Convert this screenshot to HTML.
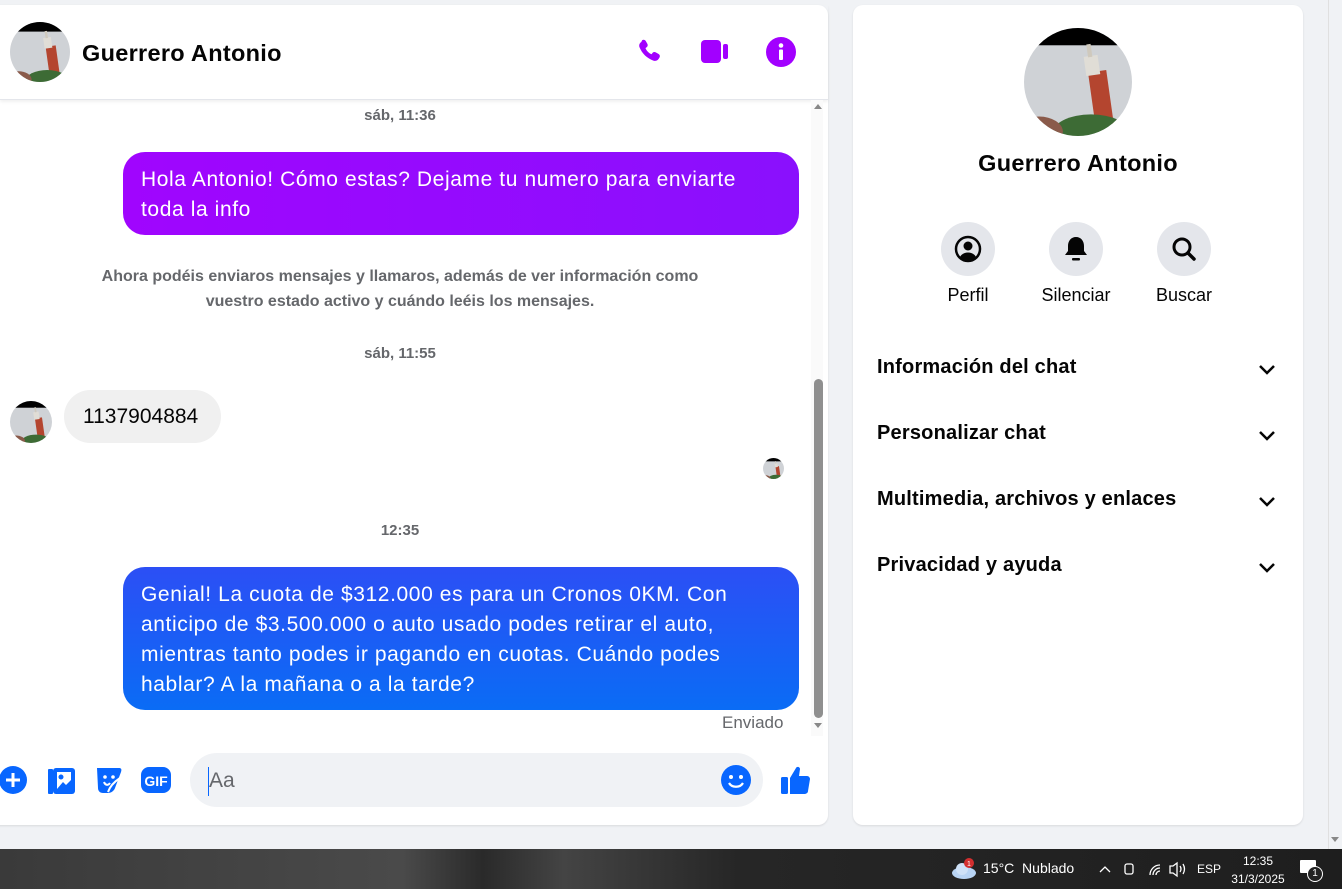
<!DOCTYPE html>
<html><head><meta charset="utf-8">
<style>
*{margin:0;padding:0;box-sizing:border-box}
body{width:1342px;height:889px;background:#f0f2f5;font-family:"Liberation Sans",sans-serif;position:relative;overflow:hidden;color:#050505}
.abs{position:absolute}
.panel{position:absolute;background:#fff;border-radius:10px;box-shadow:0 1px 2px rgba(0,0,0,.1)}
.ts{position:absolute;font-size:15px;font-weight:bold;color:#65676b;text-align:center;white-space:nowrap}
.bub{position:absolute;color:#fff;font-size:21px;letter-spacing:.6px;line-height:30px;padding:13px 18px;border-radius:22px;white-space:nowrap}
.sec{position:absolute;left:877px;width:400px;font-size:20px;font-weight:bold;color:#050505;letter-spacing:.2px}
.sec svg{position:absolute;right:0;top:3px}
.ic{position:absolute;width:54px;height:54px;border-radius:50%;background:#e4e6eb;display:flex;align-items:center;justify-content:center}
.lab{position:absolute;font-size:18px;color:#050505;text-align:center;width:100px}
.av{position:absolute;border-radius:50%;overflow:hidden}
.av svg{display:block;width:100%;height:100%}
</style></head><body>
<svg width="0" height="0" style="position:absolute"><defs>
<symbol id="av" viewBox="0 0 100 100">
<rect width="100" height="100" fill="#cfd2d6"/><rect width="100" height="16" fill="#000"/>
<rect x="62" y="40" width="17" height="50" fill="#b4452f" transform="rotate(-8 70 60)"/><rect x="60" y="25" width="13" height="18" fill="#e0ddd6" transform="rotate(-8 70 60)"/><rect x="64" y="14" width="4" height="12" fill="#cfc9bd" transform="rotate(-8 70 60)"/>
<ellipse cx="62" cy="98" rx="36" ry="18" fill="#3d6b35"/><ellipse cx="14" cy="96" rx="22" ry="14" fill="#8a5a4a"/></symbol>
</defs></svg>

<div class="panel" style="left:-10px;top:5px;width:838px;height:820px"></div>
<div class="abs" style="left:0;top:5px;width:828px;height:95px;border-bottom:1px solid #e4e6eb;box-shadow:0 2px 3px rgba(0,0,0,.06)"></div>
<div class="av" style="left:10px;top:22px;width:60px;height:60px"><svg><use href="#av"/></svg></div>
<div class="abs" style="left:82px;top:40px;font-size:23.5px;font-weight:bold;letter-spacing:.3px">Guerrero Antonio</div>
<svg class="abs" style="left:634px;top:37px" width="30" height="30" viewBox="0 0 24 24"><path fill="#a200ff" d="M6.6 2.5c1-.6 2.2-.3 2.8.7l1.3 2.3c.5.9.3 2-.5 2.6l-1 .8c.9 2.2 2.6 4 4.8 4.9l.8-1c.6-.8 1.700-1 2.6-.5l2.3 1.3c1 .6 1.3 1.8.7 2.8l-.7 1.1c-.9 1.4-2.6 2-4.2 1.4C10.4 17 6.5 13.3 4.4 8.2c-.6-1.6 0-3.3 1.4-4.2z"/></svg>
<svg class="abs" style="left:700px;top:38px" width="30" height="28" viewBox="0 0 30 28"><rect x="1" y="2" width="20" height="23" rx="4" fill="#a200ff"/><rect x="23" y="6" width="5" height="15" rx="2" fill="#a200ff"/></svg>
<svg class="abs" style="left:766px;top:37px" width="30" height="30" viewBox="0 0 30 30"><circle cx="15" cy="15" r="15" fill="#a200ff"/><circle cx="15" cy="8.5" r="2.3" fill="#fff"/><rect x="13" y="12.5" width="4" height="10.5" rx="1" fill="#fff"/></svg>

<div class="abs" style="left:811px;top:100px;width:12px;height:636px;background:#fafafa"></div>
<div class="abs" style="left:814px;top:104px;width:0;height:0;border-left:4px solid transparent;border-right:4px solid transparent;border-bottom:5px solid #888"></div>
<div class="abs" style="left:814px;top:379px;width:9px;height:339px;background:#8f8f8f;border-radius:5px"></div>
<div class="abs" style="left:814px;top:723px;width:0;height:0;border-left:4px solid transparent;border-right:4px solid transparent;border-top:5px solid #888"></div>

<div class="ts" style="left:300px;top:107px;width:200px">sáb, 11:36</div>
<div class="bub" style="left:123px;top:152px;width:676px;height:83px;background:linear-gradient(90deg,#a005fe,#8a10fd)">Hola Antonio! Cómo estas? Dejame tu numero para enviarte<br>toda la info</div>
<div class="ts" style="left:60px;top:264px;width:680px;line-height:25px;font-size:16px">Ahora podéis enviaros mensajes y llamaros, además de ver información como<br>vuestro estado activo y cuándo leéis los mensajes.</div>
<div class="ts" style="left:300px;top:345px;width:200px">sáb, 11:55</div>
<div class="av" style="left:10px;top:401px;width:42px;height:42px"><svg><use href="#av"/></svg></div>
<div class="abs" style="left:64px;top:390px;width:157px;height:53px;border-radius:27px;background:#f0f0f0;font-size:21px;line-height:53px;padding-left:19px">1137904884</div>
<div class="av" style="left:763px;top:458px;width:21px;height:21px"><svg><use href="#av"/></svg></div>
<div class="ts" style="left:300px;top:522px;width:200px">12:35</div>
<div class="bub" style="left:123px;top:567px;width:676px;height:143px;background:linear-gradient(180deg,#2c4ff5,#0a6cf5)">Genial! La cuota de $312.000 es para un Cronos 0KM. Con<br>anticipo de $3.500.000 o auto usado podes retirar el auto,<br>mientras tanto podes ir pagando en cuotas. Cuándo podes<br>hablar? A la mañana o a la tarde?</div>
<div class="abs" style="left:722px;top:713px;font-size:17px;color:#65676b">Enviado</div>

<svg class="abs" style="left:0;top:766px" width="28" height="28" viewBox="0 0 28 28"><circle cx="13" cy="14" r="14" fill="#0866ff"/><path d="M13 7v14M6 14h14" stroke="#fff" stroke-width="3"/></svg>
<svg class="abs" style="left:47px;top:766px" width="30" height="30" viewBox="0 0 30 30"><rect x="1" y="3" width="5" height="25" rx="1" fill="#0866ff"/><rect x="6" y="2" width="22" height="26" rx="3" fill="#0866ff"/><rect x="10" y="6" width="14" height="17" fill="#fff"/><circle cx="14" cy="11" r="2.5" fill="#0866ff"/><path d="M10 23l6-7 3 3 5-5v9z" fill="#0866ff"/></svg>
<svg class="abs" style="left:94px;top:765px" width="30" height="30" viewBox="0 0 30 30"><path d="M3 3h22c2 0 3 1 2 4l-6 16c-1 3-4 5-7 5H9c-3 0-5-2-5-5z" fill="#0866ff"/><circle cx="11" cy="12" r="1.8" fill="#fff"/><circle cx="19" cy="12" r="1.8" fill="#fff"/><path d="M10 17c1 3 4 4 6 1" stroke="#fff" stroke-width="2" fill="none"/><path d="M14 27c2-6 6-10 12-14" stroke="#fff" stroke-width="2" fill="none"/></svg>
<svg class="abs" style="left:140px;top:766px" width="32" height="28" viewBox="0 0 32 28"><rect x="1" y="1" width="30" height="26" rx="8" fill="#0866ff"/><text x="16" y="20" font-family="Liberation Sans" font-weight="bold" font-size="14" fill="#fff" text-anchor="middle">GIF</text></svg>
<div class="abs" style="left:190px;top:753px;width:573px;height:54px;border-radius:27px;background:#f0f2f5"></div>
<div class="abs" style="left:208px;top:767px;width:1px;height:29px;background:#0866ff"></div>
<div class="abs" style="left:209px;top:769px;font-size:21px;color:#65676b">Aa</div>
<svg class="abs" style="left:721px;top:765px" width="30" height="30" viewBox="0 0 30 30"><circle cx="15" cy="15" r="15" fill="#0866ff"/><circle cx="10" cy="12" r="2" fill="#fff"/><circle cx="20" cy="12" r="2" fill="#fff"/><path d="M8 18c3 5 11 5 14 0" stroke="#fff" stroke-width="2.2" fill="none"/></svg>
<svg class="abs" style="left:780px;top:763px" width="32" height="32" viewBox="0 0 32 32"><rect x="1" y="14" width="7" height="17" rx="1.5" fill="#0866ff"/><path d="M10 15l6-10c1-2 4-1 4 1l-1 7h8c2 0 3 2 3 3l-2 12c0 2-2 3-4 3H10z" fill="#0866ff"/></svg>

<div class="panel" style="left:853px;top:5px;width:450px;height:820px"></div>
<div class="av" style="left:1024px;top:28px;width:108px;height:108px"><svg><use href="#av"/></svg></div>
<div class="abs" style="left:853px;top:150px;width:450px;text-align:center;font-size:23.5px;font-weight:bold;letter-spacing:.3px">Guerrero Antonio</div>
<div class="ic" style="left:941px;top:222px"><svg width="28" height="28" viewBox="0 0 28 28"><circle cx="14" cy="14" r="12" fill="none" stroke="#050505" stroke-width="2.5"/><circle cx="14" cy="11" r="4.5" fill="#050505"/><path d="M6 22c3-6 13-6 16 0c-4 4-12 4-16 0z" fill="#050505"/></svg></div>
<div class="ic" style="left:1049px;top:222px"><svg width="26" height="28" viewBox="0 0 26 28"><path d="M13 2c5 0 8 4 8 9v5l3 4H2l3-4v-5c0-5 3-9 8-9z" fill="#050505"/><rect x="9" y="23" width="8" height="2.5" rx="1" fill="#050505"/></svg></div>
<div class="ic" style="left:1157px;top:222px"><svg width="28" height="28" viewBox="0 0 28 28"><circle cx="12" cy="12" r="8" fill="none" stroke="#050505" stroke-width="3"/><path d="M18 18l6 6" stroke="#050505" stroke-width="3.5" stroke-linecap="round"/></svg></div>
<div class="lab" style="left:918px;top:285px">Perfil</div>
<div class="lab" style="left:1026px;top:285px">Silenciar</div>
<div class="lab" style="left:1134px;top:285px">Buscar</div>
<div class="sec" style="top:356px">Información del chat<svg width="20" height="20" viewBox="0 0 20 20"><path d="M3 7l7 7 7-7" stroke="#050505" stroke-width="2.5" fill="none"/></svg></div>
<div class="sec" style="top:422px">Personalizar chat<svg width="20" height="20" viewBox="0 0 20 20"><path d="M3 7l7 7 7-7" stroke="#050505" stroke-width="2.5" fill="none"/></svg></div>
<div class="sec" style="top:488px">Multimedia, archivos y enlaces<svg width="20" height="20" viewBox="0 0 20 20"><path d="M3 7l7 7 7-7" stroke="#050505" stroke-width="2.5" fill="none"/></svg></div>
<div class="sec" style="top:554px">Privacidad y ayuda<svg width="20" height="20" viewBox="0 0 20 20"><path d="M3 7l7 7 7-7" stroke="#050505" stroke-width="2.5" fill="none"/></svg></div>

<div class="abs" style="left:1328px;top:0;width:14px;height:849px;background:#f0f2f5;border-left:1px solid #e0e0e0"></div>
<div class="abs" style="left:1331px;top:837px;border-left:4px solid transparent;border-right:4px solid transparent;border-top:5px solid #888"></div>

<div class="abs" style="left:0;top:849px;width:1342px;height:40px;background:linear-gradient(90deg,#3a3a3a 0%,#4a4a4a 30%,#2a2a2a 36%,#444 42%,#262626 55%,#1e1e1e 100%)"></div>
<svg class="abs" style="left:950px;top:857px" width="28" height="24" viewBox="0 0 28 24"><ellipse cx="14" cy="16" rx="12" ry="6" fill="#b8d4f4"/><circle cx="12" cy="12" r="6" fill="#cfe2f8"/><circle cx="19" cy="6" r="5" fill="#d32f2f"/><text x="19" y="9" font-size="7" fill="#fff" text-anchor="middle" font-family="Liberation Sans">1</text></svg>
<div class="abs" style="left:983px;top:860px;font-size:14px;color:#fff">15°C&nbsp;&nbsp;Nublado</div>
<svg class="abs" style="left:1097px;top:858px" width="90" height="22" viewBox="0 0 90 22" fill="none" stroke="#fff" stroke-width="1.3"><path d="M3 14l5-5 5 5"/><rect x="28" y="6" width="8" height="10" rx="2"/><path d="M53 17a10 10 0 0 1 10-10M56 17a7 7 0 0 1 7-7M59 17a4 4 0 0 1 4-4"/><path d="M73 8h3l4-3v13l-4-3h-3z"/><path d="M83 8q2 3 0 6M86 6q3 5 0 10"/></svg>
<div class="abs" style="left:1197px;top:862px;font-size:12px;color:#fff">ESP</div>
<div class="abs" style="left:1228px;top:852px;width:60px;font-size:12px;color:#fff;text-align:center;line-height:18px">12:35<br>31/3/2025</div>
<div class="abs" style="left:1300px;top:860px;width:16px;height:13px;background:#fff;border-radius:1px"></div>
<div class="abs" style="left:1307px;top:866px;width:16px;height:16px;border:1px solid #fff;border-radius:50%;background:#222;color:#fff;font-size:10px;text-align:center;line-height:14px">1</div>
</body></html>
